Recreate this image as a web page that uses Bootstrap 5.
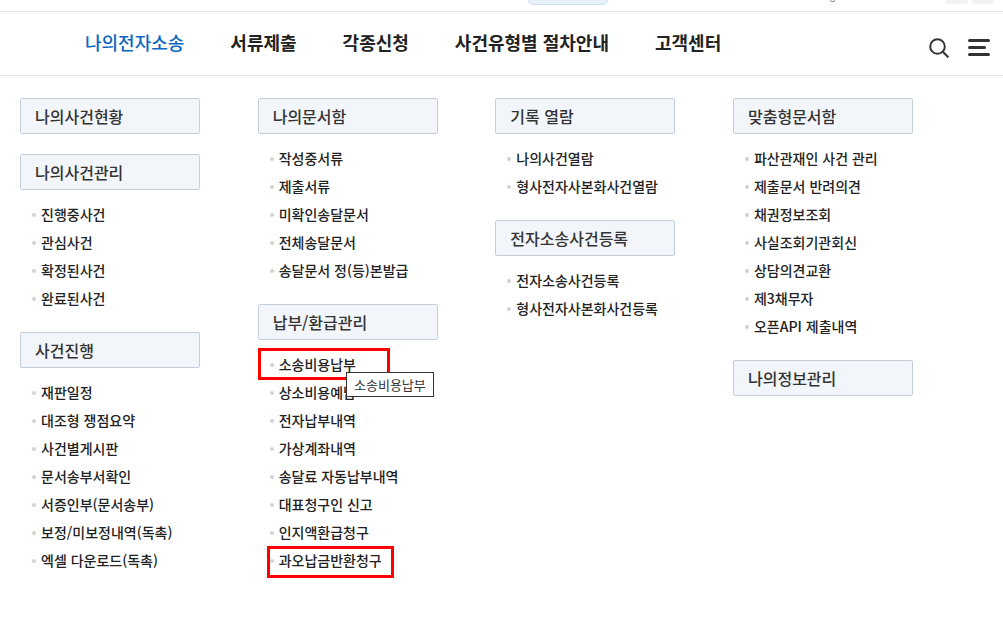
<!doctype html>
<html lang="ko">
<head>
<meta charset="utf-8">
<meta name="viewport" content="width=device-width, initial-scale=1">
<title>나의전자소송</title>
<link href="https://cdn.jsdelivr.net/npm/bootstrap@5.3.0/dist/css/bootstrap.min.css" rel="stylesheet">
<style>
  html, body { height: 625px; overflow: hidden; }
  body { background: #fff; font-family: "Noto Sans CJK KR", "Noto Sans", sans-serif; color: #222; }
  .top-strip { height: 12px; border-bottom: 1px solid #e4e6eb; overflow: hidden; }
  .top-strip > * { flex: none; }
  .top-pill { width: 80px; height: 5px; margin-left: 528px; background: #e8f0fa; border: 1px solid #d0dff2; border-top: 0; border-radius: 0 0 10px 10px; }
  .top-btn { width: 22px; height: 4px; background: #f3f3f3; border-radius: 0 0 3px 3px; }
  .top-dot { width: 5px; height: 2px; margin-left: 222px; margin-right: 111px; border: 1px solid #888; border-top: 0; border-radius: 0 0 3px 3px; }
  .gnb { height: 64px; border-bottom: 1px solid #e4e6eb; padding-left: 85px; padding-right: 13px; }
  .gnb-link { font-size: 18px; font-weight: 700; color: #222; text-decoration: none; line-height: 1; margin-top: -3px; }
  .gnb-link.on { color: #0a67c0; font-weight: 500; }
  .gnb-list { gap: 46px; }
  .gnb-icons { gap: 19px; margin-top: 8px; }
  .menu-wrap { padding: 22px 0 0 20px; column-gap: 57.67px; }
  .menu-col { width: 180px; flex: none; }
  .menu-head { height: 36px; padding-left: 14px; background: #f2f6fa; border: 1px solid #c5cedb; border-radius: 2px; font-size: 16px; font-weight: 500; color: #333; }
  .menu-sub { list-style: none; margin: 0 0 20px; padding: 10px 0 0 11px; }
  .menu-sub li { height: 28px; line-height: 28px; font-size: 14px; font-weight: 500; color: #222; padding-left: 10px; position: relative; white-space: nowrap; }
  .menu-sub li::before { content: ""; position: absolute; left: 1px; top: 13px; width: 4px; height: 4px; border-radius: 50%; background: #d2d2d2; }
  .menu-gap { margin-bottom: 20px; }
  .mark-box { position: absolute; border: 3px solid #f00; }
  .mark-a { left: 258px; top: 348px; width: 132px; height: 32px; }
  .mark-b { left: 267px; top: 546px; width: 127px; height: 32px; }
  .tip-box { position: absolute; left: 346px; top: 372px; height: 25px; padding: 0 7px; line-height: 24px; background: #fff; border: 1px solid #333; font-size: 13px; color: #333; white-space: nowrap; }
</style>
</head>
<body class="position-relative">
  <div class="top-strip d-flex align-items-start">
    <div class="top-pill"></div>
    <div class="top-dot"></div>
    <div class="d-flex gap-1">
      <div class="top-btn"></div>
      <div class="top-btn"></div>
    </div>
  </div>

  <nav class="gnb d-flex align-items-center justify-content-between">
    <div class="gnb-list d-flex">
      <a class="gnb-link on" href="#">나의전자소송</a>
      <a class="gnb-link" href="#">서류제출</a>
      <a class="gnb-link" href="#">각종신청</a>
      <a class="gnb-link" href="#">사건유형별 절차안내</a>
      <a class="gnb-link" href="#">고객센터</a>
    </div>
    <div class="gnb-icons d-flex align-items-center">
      <svg width="20" height="20" viewBox="0 0 20 20" fill="none" stroke="#333" stroke-width="2"><circle cx="8.5" cy="8.5" r="7.3"/><path d="M13.8 13.8l5.6 5.6"/></svg>
      <svg width="22" height="17" viewBox="0 0 22 17" fill="#333"><rect width="22" height="3" rx="1.5"/><rect width="18" height="3" y="7" rx="1.5"/><rect width="22" height="3" y="14" rx="1.5"/></svg>
    </div>
  </nav>

  <div class="menu-wrap d-flex align-items-start">
    <div class="menu-col">
      <div class="menu-head d-flex align-items-center menu-gap">나의사건현황</div>
      <div class="menu-head d-flex align-items-center">나의사건관리</div>
      <ul class="menu-sub">
        <li>진행중사건</li><li>관심사건</li><li>확정된사건</li><li>완료된사건</li>
      </ul>
      <div class="menu-head d-flex align-items-center">사건진행</div>
      <ul class="menu-sub">
        <li>재판일정</li><li>대조형 쟁점요약</li><li>사건별게시판</li><li>문서송부서확인</li><li>서증인부(문서송부)</li><li>보정/미보정내역(독촉)</li><li>엑셀 다운로드(독촉)</li>
      </ul>
    </div>
    <div class="menu-col">
      <div class="menu-head d-flex align-items-center">나의문서함</div>
      <ul class="menu-sub">
        <li>작성중서류</li><li>제출서류</li><li>미확인송달문서</li><li>전체송달문서</li><li>송달문서 정(등)본발급</li>
      </ul>
      <div class="menu-head d-flex align-items-center">납부/환급관리</div>
      <ul class="menu-sub">
        <li>소송비용납부</li><li>상소비용예납</li><li>전자납부내역</li><li>가상계좌내역</li><li>송달료 자동납부내역</li><li>대표청구인 신고</li><li>인지액환급청구</li><li>과오납금반환청구</li>
      </ul>
    </div>
    <div class="menu-col">
      <div class="menu-head d-flex align-items-center">기록 열람</div>
      <ul class="menu-sub">
        <li>나의사건열람</li><li>형사전자사본화사건열람</li>
      </ul>
      <div class="menu-head d-flex align-items-center">전자소송사건등록</div>
      <ul class="menu-sub">
        <li>전자소송사건등록</li><li>형사전자사본화사건등록</li>
      </ul>
    </div>
    <div class="menu-col">
      <div class="menu-head d-flex align-items-center">맞춤형문서함</div>
      <ul class="menu-sub">
        <li>파산관재인 사건 관리</li><li>제출문서 반려의견</li><li>채권정보조회</li><li>사실조회기관회신</li><li>상담의견교환</li><li>제3채무자</li><li>오픈API 제출내역</li>
      </ul>
      <div class="menu-head d-flex align-items-center">나의정보관리</div>
    </div>
  </div>

  <div class="mark-box mark-a"></div>
  <div class="mark-box mark-b"></div>
  <div class="tip-box">소송비용납부</div>

  <script src="https://cdn.jsdelivr.net/npm/bootstrap@5.3.0/dist/js/bootstrap.bundle.min.js"></script>
</body>
</html>
